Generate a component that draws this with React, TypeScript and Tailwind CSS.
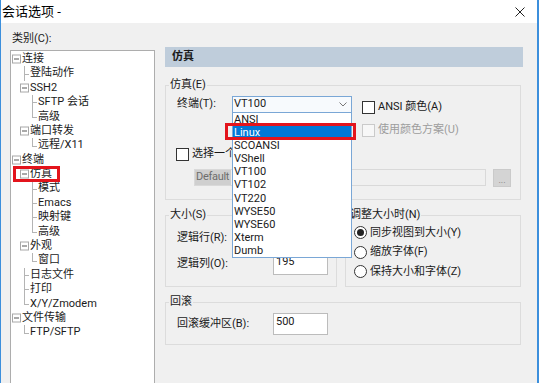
import { ReactNode } from "react";

type Node = { t: string; l: 0 | 1 | 2; box?: boolean; last?: boolean };

const tree: Node[] = [
  { t: "连接", l: 0, box: true },
  { t: "登陆动作", l: 1 },
  { t: "SSH2", l: 1, box: true },
  { t: "SFTP 会话", l: 2 },
  { t: "高级", l: 2, last: true },
  { t: "端口转发", l: 1, box: true },
  { t: "远程/X11", l: 2, last: true },
  { t: "终端", l: 0, box: true },
  { t: "仿真", l: 1, box: true },
  { t: "模式", l: 2 },
  { t: "Emacs", l: 2 },
  { t: "映射键", l: 2 },
  { t: "高级", l: 2, last: true },
  { t: "外观", l: 1, box: true },
  { t: "窗口", l: 2, last: true },
  { t: "日志文件", l: 1 },
  { t: "打印", l: 1 },
  { t: "X/Y/Zmodem", l: 1, last: true },
  { t: "文件传输", l: 0, box: true },
  { t: "FTP/SFTP", l: 1, last: true },
];

const textPad = ["pl-[11px]", "pl-[19px]", "pl-[27px]"];
const boxLeft = ["left-[1px]", "left-[9px]", "left-[17px]"];
const lineLeft = ["left-[5px]", "left-[13px]", "left-[21px]"];

const terminals = ["ANSI", "Linux", "SCOANSI", "VShell", "VT100", "VT102", "VT220", "WYSE50", "WYSE60", "Xterm", "Dumb"];

function TreeRow({ n }: { n: Node }) {
  return (
    <div className={`relative h-[14.4px] flex items-center whitespace-nowrap ${textPad[n.l]}`}>
      {n.box ? (
        <span className={`absolute top-1/2 -translate-y-1/2 w-[9px] h-[9px] border border-[#a8a8a8] bg-white flex items-center justify-center ${boxLeft[n.l]}`}>
          <span className="w-[5px] h-px bg-[#555]" />
        </span>
      ) : (
        <>
          <span className={`absolute top-0 w-px bg-[#b4b4b4] ${n.last ? "h-1/2" : "h-full"} ${lineLeft[n.l]}`} />
          <span className={`absolute top-1/2 w-[5px] h-px bg-[#b4b4b4] ${lineLeft[n.l]}`} />
        </>
      )}
      {n.t}
    </div>
  );
}

function Check({ disabled }: { disabled?: boolean }) {
  return (
    <span
      className={`w-[13px] h-[13px] shrink-0 border ${
        disabled ? "border-[#cacaca] bg-[#f7f7f7]" : "border-[#333] bg-white"
      }`}
    />
  );
}

function Radio({ on }: { on?: boolean }) {
  return (
    <span className="w-[13px] h-[13px] shrink-0 rounded-full border border-[#333] bg-white flex items-center justify-center">
      {on && <span className="w-[7px] h-[7px] rounded-full bg-[#222]" />}
    </span>
  );
}

function Group({ label, className, children }: { label: string; className: string; children: ReactNode }) {
  return (
    <fieldset className={`border border-[#dcdcdc] ${className}`}>
      <legend className="ml-[3px] px-[1px] leading-[14px]">{label}</legend>
      {children}
    </fieldset>
  );
}

function Field({ value }: { value?: string }) {
  return (
    <div className="w-[55px] h-[22px] border border-[#bcbcbc] bg-white pl-[2px] pt-px leading-[14px]">{value}</div>
  );
}

export default function App() {
  return (
    <div className="relative w-[539px] h-[383px] overflow-hidden bg-[#f0f0f0] border-l border-l-[#3c8fdc] border-r-2 border-r-[#3c8fdc] font-['Roboto','Noto_Sans_CJK_SC',sans-serif] text-[11px] text-[#1a1a1a]">
      <div className="h-[23px] bg-white flex items-center justify-between pl-[1px] pr-[12px]">
        <span className="text-[13px] text-black">会话选项 -</span>
        <svg width="10" height="10" viewBox="0 0 10 10">
          <path d="M0.5 0.5 L9.5 9.5 M9.5 0.5 L0.5 9.5" stroke="#222" strokeWidth="1" />
        </svg>
      </div>

      <div className="flex items-start pt-[8px] pl-[9px]">
        <div className="w-[145px] shrink-0">
          <div className="h-[19px] leading-[15px] pl-[2px]">类别(C):</div>
          <div className="h-[340px] border border-[#adadad] bg-white pt-px">
            {tree.map((n, i) => (
              <TreeRow key={i} n={n} />
            ))}
          </div>
        </div>

        <div className="ml-[10px] w-[358px] shrink-0">
          <div className="mt-[16px] h-[20px] bg-[#bfcddb] flex items-center pl-[7px] font-bold">仿真</div>

          <Group label="仿真(E)" className="mt-[11px] w-[356px] pb-[12px]">
            <div className="flex items-start mt-[4px]">
              <div className="flex items-center h-[17px] pl-[11px]">
                <span className="w-[55px]">终端(T):</span>
                <div className="w-[120px] h-[17px] border border-[#7aa7d6] bg-[#f7fafd] flex items-center justify-between pl-px pr-[4px]">
                  <span>VT100</span>
                  <svg width="8" height="5" viewBox="0 0 8 5">
                    <path d="M0.5 0.5 L4 4 L7.5 0.5" fill="none" stroke="#777" strokeWidth="1" />
                  </svg>
                </div>
              </div>
              <div className="ml-[10px] mt-[5px] flex flex-col gap-[10px]">
                <div className="flex items-center h-[13px] gap-[3px]">
                  <Check />
                  <span>ANSI 颜色(A)</span>
                </div>
                <div className="flex items-center h-[13px] gap-[3px] text-[#9d9d9d]">
                  <Check disabled />
                  <span>使用颜色方案(U)</span>
                </div>
              </div>
            </div>
            <div className="mt-[11px] pl-[10px] flex items-center h-[13px] gap-[3px] whitespace-nowrap">
              <Check />
              <span>选择一个</span>
            </div>
            <div className="mt-[8px] pl-[28px] flex items-start">
              <div className="w-[292px] h-[17px] border border-[#d9d9d9] bg-[#f0f0f0] flex">
                <span className="h-full bg-[#cfcfcf] text-[#6d6d6d] pl-px pr-[2px] flex items-center tracking-[-0.3px]">Default</span>
              </div>
              <div className="ml-[7px] w-[18px] h-[18px] bg-[#d4d4d4] border border-[#cacaca] text-[#7a7a7a] flex items-end justify-center leading-[12px] text-[9px]">
                ...
              </div>
            </div>
          </Group>

          <div className="flex items-stretch gap-[8px] mt-[8px]">
            <Group label="大小(S)" className="w-[172px] pb-[11px]">
              <div className="mt-[5px] flex flex-col gap-[4px]">
                <div className="flex items-center h-[22px] pl-[11px]">
                  <span className="w-[96px]">逻辑行(R):</span>
                  <Field />
                </div>
                <div className="flex items-center h-[22px] pl-[11px]">
                  <span className="w-[96px]">逻辑列(O):</span>
                  <Field value="195" />
                </div>
              </div>
            </Group>
            <Group label="调整大小时(N)" className="w-[176px]">
              <div className="mt-px">
                <div className="flex items-center h-[19.5px] pl-[8px] gap-[3px]">
                  <Radio on />
                  <span>同步视图到大小(Y)</span>
                </div>
                <div className="flex items-center h-[19.5px] pl-[8px] gap-[3px]">
                  <Radio />
                  <span>缩放字体(F)</span>
                </div>
                <div className="flex items-center h-[19.5px] pl-[8px] gap-[3px]">
                  <Radio />
                  <span>保持大小和字体(Z)</span>
                </div>
              </div>
            </Group>
          </div>

          <Group label="回滚" className="mt-[8px] w-[356px] pb-[9px]">
            <div className="mt-[4px] flex items-center h-[22px] pl-[11px]">
              <span className="w-[96px]">回滚缓冲区(B):</span>
              <Field value="500" />
            </div>
          </Group>
        </div>
      </div>

      <div className="absolute left-[231px] top-[112px] w-[120px] border border-[#7aa7d6] bg-white">
        {terminals.map((t) => (
          <div
            key={t}
            className={`h-[13.1px] leading-[13.1px] pl-px ${t === "Linux" ? "bg-[#0078d7] text-white" : ""}`}
          >
            {t}
          </div>
        ))}
      </div>

      <div className="absolute left-[224px] top-[123px] w-[131px] h-[17px] border-[3px] border-[#e3141c]" />
      <div className="absolute left-[12px] top-[166px] w-[47px] h-[16px] border-[3px] border-[#e3141c]" />
    </div>
  );
}
